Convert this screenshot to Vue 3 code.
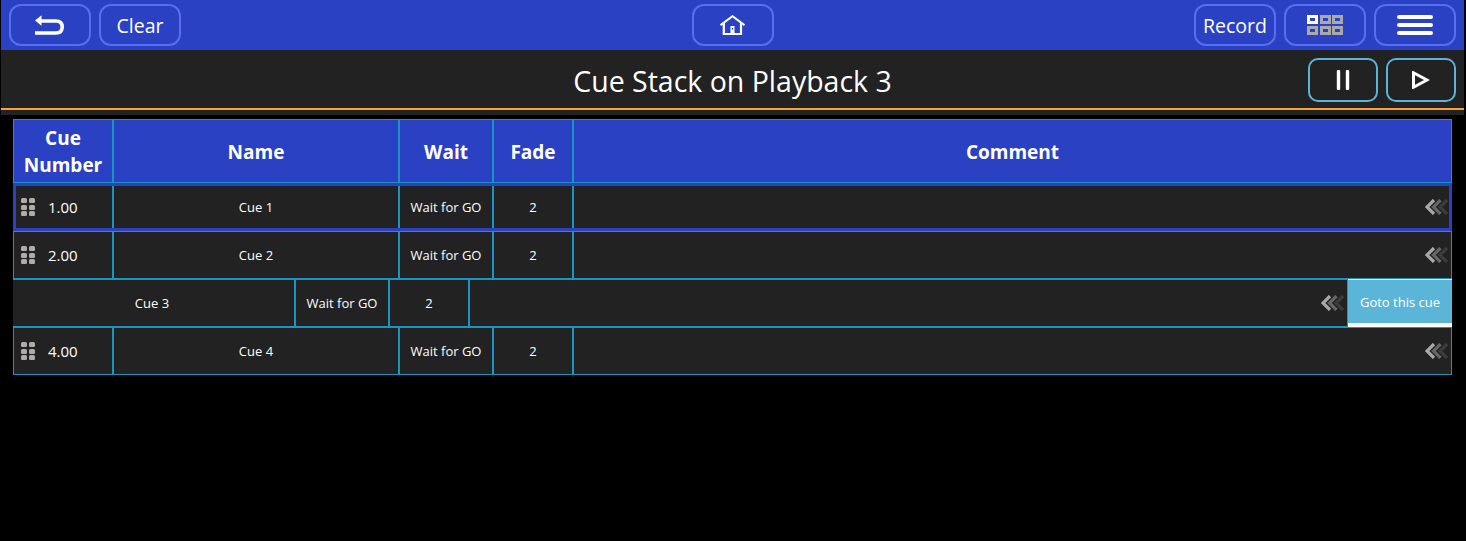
<template>
  <div class="page">
    <div class="topbar">
      <div class="top_side">
        <button class="top_btn"><svg width="30" height="20" viewBox="0 0 30 20"><path d="M5 6H21Q27.2 6 27.2 12T21 18H0" fill="none" stroke="#fff" stroke-width="3.6"/><path d="M0 5.5L6.5 0.2V10.8Z" fill="#fff"/></svg></button>
        <button class="top_btn">Clear</button>
      </div>
      <button class="top_btn"><svg width="25" height="20" viewBox="0 0 25 20"><path d="M0.5 10.2L12.5 1.2L24.5 10.2" fill="none" stroke="#fff" stroke-width="2"/><path d="M3.8 8V19H21V8" fill="none" stroke="#fff" stroke-width="2.2"/><rect x="10.5" y="11" width="4" height="8" fill="#fff"/><rect x="12" y="13" width="1.2" height="1.6" fill="#2b41c3"/></svg></button>
      <div class="top_side right">
        <button class="top_btn">Record</button>
        <button class="top_btn">
          <span class="grid_icon"><i class="on"></i><i></i><i></i><i></i><i></i><i></i></span>
        </button>
        <button class="top_btn">
          <span class="burger"><i></i><i></i><i></i></span>
        </button>
      </div>
    </div>

    <div class="titlebar">
      <div class="title_inner">
        <div></div>
        <h1>Cue Stack on Playback 3</h1>
        <div class="title_btns">
          <button class="ctl_btn"><svg width="14" height="20" viewBox="0 0 14 20"><path d="M2.5 1.5V18.5M11.5 1.5V18.5" stroke="#fff" stroke-width="3.4" stroke-linecap="round"/></svg></button>
          <button class="ctl_btn"><svg width="18" height="18" viewBox="0 0 18 18"><path d="M1.5 1.8L15 9L1.5 16.2Z" fill="none" stroke="#fff" stroke-width="3"/></svg></button>
        </div>
      </div>
    </div>

    <div class="table_wrap">
      <div class="head">
        <div class="cell c_num">Cue<br>Number</div>
        <div class="cell c_name">Name</div>
        <div class="cell c_wait">Wait</div>
        <div class="cell c_fade">Fade</div>
        <div class="cell c_comment">Comment</div>
      </div>

      <div v-for="cue in cues" :key="cue.name" class="row" :class="{ selected: cue.selected, swiped: cue.swiped }">
        <div class="slide">
          <div class="cell c_num">
            <template v-if="!cue.swiped">
              <span class="handle"><i v-for="n in 6" :key="n"></i></span>
              <span>{{ cue.num }}</span>
            </template>
          </div>
          <div class="cell c_name">{{ cue.name }}</div>
          <div class="cell c_wait">{{ cue.wait }}</div>
          <div class="cell c_fade">{{ cue.fade }}</div>
          <div class="cell c_comment">
            <svg class="chev" width="24" height="16" viewBox="0 0 24 16">
              <path d="M22 1L15 8L22 15" stroke="#3c3c3c"/>
              <path d="M15.5 1L8.5 8L15.5 15" stroke="#666"/>
              <path d="M9 1L2 8L9 15" stroke="#a8a8a8"/>
            </svg>
          </div>
        </div>
        <div v-if="cue.swiped" class="goto">Goto this cue</div>
      </div>
    </div>
  </div>
</template>

<script setup>
const cues = [
  { num: "1.00", name: "Cue 1", wait: "Wait for GO", fade: "2", selected: true },
  { num: "2.00", name: "Cue 2", wait: "Wait for GO", fade: "2" },
  { num: "3.00", name: "Cue 3", wait: "Wait for GO", fade: "2", swiped: true },
  { num: "4.00", name: "Cue 4", wait: "Wait for GO", fade: "2" },
];
</script>

<style>
html, body {
  background: #000;
}
</style>

<style scoped>
.page {
  width: 1463px;
  margin-left: 1px;
  height: 541px;
  background: #000;
  color: #fff;
  font-family: "Open Sans", "Noto Sans", sans-serif;
}

.topbar {
  height: 50px;
  box-sizing: border-box;
  padding: 4px 8px;
  background: #2b41c3;
  display: grid;
  grid-template-columns: 1fr auto 1fr;
  align-items: start;
}

.top_side {
  display: flex;
  gap: 8px;
}

.top_side.right {
  justify-content: flex-end;
}

.top_btn {
  width: 82px;
  height: 42px;
  padding: 0;
  box-sizing: border-box;
  background: #2b41c3;
  border: 2px solid #5470ee;
  border-radius: 12px;
  color: #fff;
  font-family: inherit;
  font-size: 19.5px;
  display: flex;
  align-items: center;
  justify-content: center;
}

.grid_icon {
  display: grid;
  grid-template-columns: repeat(3, 11px);
  grid-template-rows: repeat(2, 9px);
  column-gap: 1.5px;
  row-gap: 2px;
}

.grid_icon i {
  border: 3px solid #a9a9a9;
  box-sizing: border-box;
}

.grid_icon i.on {
  border-color: #fff;
}

.burger {
  display: flex;
  flex-direction: column;
  gap: 4px;
}

.burger i {
  width: 36px;
  height: 4px;
  border-radius: 2px;
  background: #fff;
}

.titlebar {
  background: #222;
  padding-bottom: 5px;
}

.title_inner {
  height: 60px;
  box-sizing: border-box;
  padding: 8px 8px 0;
  border-bottom: 2px solid #f9a03f;
  display: grid;
  grid-template-columns: 1fr auto 1fr;
  align-items: start;
}

.title_inner h1 {
  margin: 0;
  padding-top: 4px;
  font-size: 28.5px;
  font-weight: 400;
  line-height: 38px;
  text-align: center;
}

.title_btns {
  display: flex;
  justify-content: flex-end;
  gap: 8px;
}

.ctl_btn {
  width: 70px;
  height: 44px;
  padding: 0;
  box-sizing: border-box;
  background: #222;
  border: 2px solid #5bb5d9;
  border-radius: 10px;
  display: flex;
  align-items: center;
  justify-content: center;
}

.table_wrap {
  width: 1439px;
  margin: 4px 0 0 12px;
}

.head {
  display: flex;
  height: 64px;
  box-sizing: border-box;
  background: #2b41c3;
  border: 1px solid #1a94c0;
  font-size: 19px;
  font-weight: 700;
  line-height: 27px;
}

.head .cell {
  padding-top: 2px;
}

.row {
  position: relative;
  height: 48px;
  overflow: hidden;
  background: #222;
  font-size: 13px;
}

.slide {
  display: flex;
  height: 100%;
  box-sizing: border-box;
  border: 1px solid #1a94c0;
}

.cell {
  flex: none;
  box-sizing: border-box;
  display: flex;
  align-items: center;
  justify-content: center;
  text-align: center;
  border-left: 2px solid #1a94c0;
}

.c_num {
  width: 98px;
  border-left: 0;
}

.c_name {
  width: 286px;
}

.c_wait {
  width: 94px;
}

.c_fade {
  width: 80px;
}

.c_comment {
  flex: 1;
  min-width: 0;
  justify-content: flex-end;
  padding-right: 2px;
}

.head .c_comment {
  justify-content: center;
  padding-right: 0;
}

.row .c_num {
  justify-content: flex-start;
  padding-left: 7px;
  gap: 13px;
  font-size: 15px;
}

.handle {
  display: grid;
  grid-template-columns: repeat(2, 6px);
  grid-template-rows: repeat(3, 5px);
  column-gap: 2px;
  row-gap: 1.5px;
}

.handle i {
  background: #b0aca8;
  border-radius: 1.5px;
}

.chev path {
  fill: none;
  stroke-width: 3.2;
}

.selected .slide {
  border: 3px solid #2b41c3;
}

.selected .c_num {
  width: 96px;
  padding-left: 5px;
}

.selected .c_comment {
  padding-right: 0;
}

/* goto button is revealed by sliding the cells left */
.swiped .slide {
  transform: translateX(-104px);
}

.goto {
  position: absolute;
  top: 0;
  right: 0;
  bottom: 0;
  width: 104px;
  box-sizing: border-box;
  display: flex;
  align-items: center;
  justify-content: center;
  background: #5bb5d9;
  border-top: 1px solid #fff;
  border-bottom: 4px solid #fff;
}
</style>
